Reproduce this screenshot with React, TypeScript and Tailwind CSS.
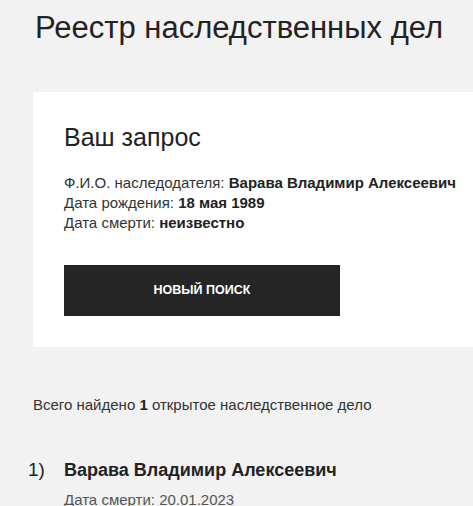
export default function App() {
  return (
    <div
      className="min-h-[506px] w-full overflow-hidden bg-[#f2f2f2] text-[#222]"
      style={{ fontFamily: "'Liberation Sans', Arial, sans-serif" }}
    >
      {/* Header */}
      <h1 className="pl-[35px] pt-[10px] text-[31px] leading-[36px] font-normal">
        Реестр наследственных дел
      </h1>

      {/* Query card */}
      <div className="ml-[33px] mt-[46px] bg-white pl-[31px] pt-[31px] pb-[31px]">
        <h2 className="text-[25px] leading-[28px] font-normal">Ваш запрос</h2>
        <div className="mt-[22px] text-[15px] leading-[20px] text-[#333]">
          <p>
            Ф.И.О. наследодателя: <b className="text-[#222]">Варава Владимир Алексеевич</b>
          </p>
          <p>
            Дата рождения: <b className="text-[#222]">18 мая 1989</b>
          </p>
          <p>
            Дата смерти: <b className="text-[#222]">неизвестно</b>
          </p>
        </div>
        <button className="mt-[32px] flex h-[51px] w-[276px] items-center justify-center bg-[#252525] text-[12.5px] font-bold uppercase text-white">
          Новый поиск
        </button>
      </div>

      {/* Results */}
      <p className="mt-[48px] pl-[33px] text-[15px] leading-[20px] text-[#333]">
        Всего найдено <b className="text-[#222]">1</b> открытое наследственное дело
      </p>

      <div className="mt-[43px] flex">
        <span className="w-[64px] pl-[28px] text-[19px] leading-[24px]">1)</span>
        <div>
          <p className="text-[18px] leading-[24px] font-bold">Варава Владимир Алексеевич</p>
          <p className="mt-[8px] text-[15px] leading-[20px] text-[#555]">Дата смерти: 20.01.2023</p>
        </div>
      </div>
    </div>
  );
}
